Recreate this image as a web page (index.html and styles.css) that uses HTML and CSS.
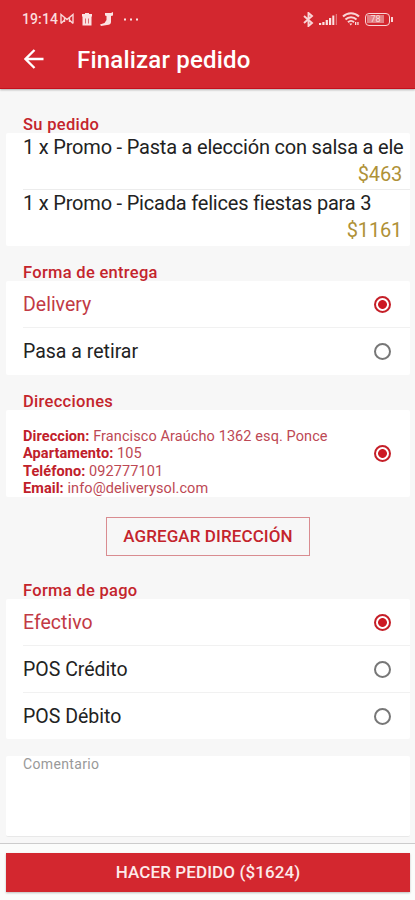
FILE: index.html
```
<!DOCTYPE html>
<html lang="es">
<head>
 <meta charset="UTF-8">
 <meta name="viewport" content="width=device-width, initial-scale=1">
 <title>Finalizar pedido</title>
 <link rel="stylesheet" href="styles.css">
</head>
<body>
 <header class="header">
  <div class="status-bar">
   <span class="clock">19:14</span>
   <svg class="icon-mail" width="14" height="12" viewBox="0 0 14 12"><path d="M1 10.500V1.500l6 5 6-5v9M1 10.500l4-4M13 10.500l-4-4M4.500 4v5M9.500 4v5"/></svg>
   <svg class="icon-trash" width="10" height="13" viewBox="0 0 10 13"><path class="solid" d="M0 1h3V0h4v1h3v2.500H0zM.5 3.500h9V12.500h-9z"/><path class="cut" d="M3.500 5.500v5M6.500 5.500v5"/></svg>
   <svg class="icon-note" width="14" height="14" viewBox="0 0 14 14"><path class="solid" d="M5 1h6l2-1v3.500l-2 .5v6c0 2-1.500 3-4 3l-6 1-1-1.500L4.500 11l2-3V4L5 3.500z"/></svg>
   <svg class="icon-more" width="15" height="3" viewBox="0 0 15 3"><path class="solid" d="M0 .5h2v2H0zM6 .5h2v2H6zM12 .5h2v2h-2z"/></svg>
   <div class="status-right">
    <svg class="icon-bluetooth" width="11" height="15" viewBox="0 0 11 15"><path d="M1 4l8 7-3.500 3V1L9 4l-8 7"/></svg>
    <svg width="18" height="13" viewBox="0 0 18 13"><path class="solid" d="M0 10h2.200v2H0zM3.300 9h2.200v3H3.300zM6.700 7h2.200v5H6.700zM10 5h2.200v7H10zM13.300 2.500h2v9.500h-2z"/><path class="faint" d="M17.300 1v11"/></svg>
    <svg class="icon-wifi" width="18" height="14" viewBox="0 0 18 14"><path d="M1 4.500c4.500-4.300 11.500-4.300 16 0M3.500 7.500c3-3 8-3 11 0M6 10.200c1.700-1.700 4.300-1.700 6 0"/><path class="solid" d="M7.300 11.500h3L8.800 13.500zM13 10h1.300v3H13zM15.300 10h1.300v3h-1.300z"/></svg>
    <div class="battery"><span>78</span></div>
   </div>
  </div>
  <div class="toolbar">
   <svg class="back" width="20" height="20" viewBox="0 0 20 20"><path d="M19.500 10H2M10.500 1L1.500 10l9 9"/></svg>
   <h1>Finalizar pedido</h1>
  </div>
 </header>

 <main>
  <h2 class="h-order">Su pedido</h2>
  <section class="card order">
   <div class="item">
    <p class="name">1 x Promo - Pasta a elección con salsa a ele</p>
    <p class="price">$463</p>
   </div>
   <div class="item">
    <p class="name">1 x Promo - Picada felices fiestas para 3</p>
    <p class="price">$1161</p>
   </div>
  </section>

  <h2 class="h-delivery">Forma de entrega</h2>
  <section class="card delivery">
   <div class="option selected"><span>Delivery</span><i class="radio"></i></div>
   <div class="option"><span>Pasa a retirar</span><i class="radio"></i></div>
  </section>

  <h2 class="h-address">Direcciones</h2>
  <section class="card address">
   <div class="lines">
    <p><b>Direccion:</b> Francisco Araúcho 1362 esq. Ponce</p>
    <p><b>Apartamento:</b> 105</p>
    <p><b>Teléfono:</b> 092777101</p>
    <p><b>Email:</b> info@deliverysol.com</p>
   </div>
   <i class="radio checked"></i>
  </section>
  <button class="add-address">AGREGAR DIRECCIÓN</button>

  <h2 class="h-payment">Forma de pago</h2>
  <section class="card payment">
   <div class="option selected"><span>Efectivo</span><i class="radio"></i></div>
   <div class="option"><span>POS Crédito</span><i class="radio"></i></div>
   <div class="option"><span>POS Débito</span><i class="radio"></i></div>
  </section>

  <section class="card comment">
   <label>Comentario</label>
  </section>
 </main>

 <footer class="footer">
  <button class="submit">HACER PEDIDO ($1624)</button>
 </footer>
</body>
</html>
```
FILE: styles.css
```
:root {
 --red: #d3272f;
 --red-text: #c4242c;
 --gold: #af9137;
}

* {
 box-sizing: border-box;
}

body {
 margin: 0;
 height: 900px;
 display: flex;
 flex-direction: column;
 overflow: hidden;
 background: #f7f7f7;
 color: #222;
 font-family: Roboto, sans-serif;
}

h1, h2, p {
 margin: 0;
}

/* Header */
.header {
 flex: none;
 height: 89px;
 background: var(--red);
 color: #fff;
 border-bottom: 1px solid #c5101c;
 box-shadow: 0 1px 2px rgba(0, 0, 0, 0.3);
}

.header svg {
 flex: none;
 fill: none;
 stroke: #f9d5d6;
 stroke-width: 1.4;
}

.header svg .solid {
 fill: #fbe3e3;
 stroke: none;
}

.header svg .cut {
 stroke: #dc6b70;
 stroke-width: 1;
}

.header svg .faint {
 stroke: #e58b8f;
 stroke-width: 1;
}

.status-bar {
 display: flex;
 align-items: center;
 height: 38px;
 padding: 0 25px 0 22px;
 color: #fbdcdd;
}

.clock {
 width: 38px;
 font-size: 14px;
 font-weight: 500;
 letter-spacing: 0.1px;
}

.icon-trash {
 margin-left: 8px;
}

.icon-note {
 margin-left: 8px;
}

.icon-more {
 margin-left: 10px;
}

.status-right {
 display: flex;
 align-items: center;
 gap: 5px;
 margin-left: auto;
}

.header .icon-bluetooth {
 stroke-width: 1.9;
}

.header .icon-wifi {
 stroke-width: 2;
}

.battery {
 position: relative;
 width: 25px;
 height: 13px;
 border: 1.5px solid #f9d5d6;
 border-radius: 4px;
 padding: 1px;
 font-size: 9px;
 line-height: 8px;
 text-align: center;
}

.battery span {
 display: block;
 width: 17px;
 background: #e37f83;
}

.battery::after {
 content: "";
 position: absolute;
 right: -4px;
 top: 3px;
 width: 2px;
 height: 5px;
 background: #f9d5d6;
}

.toolbar {
 display: flex;
 align-items: center;
 height: 42px;
 padding-left: 24px;
}

.header .back {
 stroke: #fff;
 stroke-width: 2.3;
}

h1 {
 margin-left: 33px;
 padding-top: 2px;
 font-size: 24px;
 font-weight: 500;
 line-height: 28px;
 letter-spacing: 0.2px;
}

/* Content */
main {
 flex: 1;
 display: flex;
 flex-direction: column;
 padding: 0 5px 0 6px;
}

h2 {
 height: 18px;
 padding-left: 17px;
 color: var(--red-text);
 font-size: 16.5px;
 font-weight: 500;
 line-height: 20px;
 letter-spacing: 0.3px;
}

.h-order {
 margin-top: 26px;
}

.h-delivery,
.h-address {
 margin-top: 17px;
}

.h-payment {
 margin-top: 25px;
}

.card {
 background: #fff;
 border-radius: 2px;
 padding-left: 17px;
}

.order {
 height: 113px;
}

.item {
 height: 56px;
 padding-top: 1px;
 line-height: 27px;
 font-size: 20px;
 letter-spacing: -0.2px;
}

.item + .item {
 padding-top: 0;
 border-top: 1px solid #ececec;
}

.name {
 white-space: nowrap;
}

.price {
 padding-right: 8px;
 color: var(--gold);
 text-align: right;
}

.option {
 display: flex;
 align-items: center;
 justify-content: space-between;
 height: 47px;
 padding-right: 19px;
 font-size: 19.5px;
}

.option:first-child {
 height: 46px;
}

.option + .option {
 border-top: 1px solid #f1f1f1;
}

.selected {
 color: #c23a45;
}

.radio {
 flex: none;
 width: 17px;
 height: 17px;
 border: 2px solid #777;
 border-radius: 50%;
}

.selected .radio,
.checked {
 border-color: #c51f28;
 background: radial-gradient(circle, #cc1822 4px, #fff 4.8px);
}

.delivery {
 height: 94px;
}

.address {
 display: flex;
 align-items: center;
 justify-content: space-between;
 height: 87px;
 padding-right: 19px;
}

.lines {
 padding-top: 18px;
 color: #bd4854;
 font-size: 14.5px;
 line-height: 17.3px;
 letter-spacing: 0.09px;
}

.lines b {
 color: #c0202a;
}

.add-address {
 align-self: center;
 width: 204px;
 height: 39px;
 margin-top: 20px;
 padding: 0 0 2px;
 border: 1px solid #d98c90;
 background: transparent;
 color: var(--red-text);
 font: 500 17px Roboto, sans-serif;
 letter-spacing: 0.1px;
}

.comment {
 height: 81px;
 margin-top: 17px;
 border-bottom: 1px solid #e8e8e8;
 color: #999;
 font-size: 14px;
 line-height: 17px;
 letter-spacing: 0.35px;
}

/* Footer */
.footer {
 flex: none;
 height: 57px;
 padding: 9px 5px 0 6px;
 border-top: 1px solid #ccc;
 background: #fbfcfb;
}

.submit {
 display: block;
 width: 100%;
 height: 39px;
 padding: 0 0 2px;
 border: 0;
 background: var(--red);
 box-shadow: 0 1px 2px rgba(0, 0, 0, 0.25);
 color: #fdeaea;
 font: 500 17px Roboto, sans-serif;
 letter-spacing: 0.1px;
}
```
